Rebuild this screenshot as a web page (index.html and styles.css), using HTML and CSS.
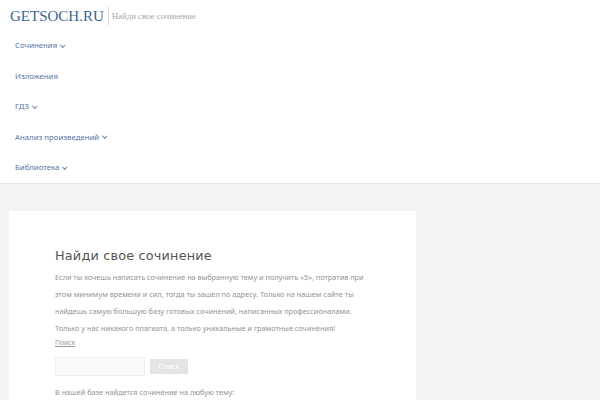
FILE: index.html
```html
<!DOCTYPE html>
<html lang="ru">
<head>
<meta charset="utf-8">
<link rel="stylesheet" href="styles.css">
</head>
<body>
<header class="site-header">
  <div class="branding">
    <a class="logo" href="#">GETSOCH.RU</a>
    <span class="tagline">Найди свое сочинение</span>
  </div>
  <nav class="menu">
    <a class="menu-item" href="#">Сочинения <span class="caret"></span></a>
    <a class="menu-item" href="#">Изложения</a>
    <a class="menu-item" href="#">ГДЗ <span class="caret"></span></a>
    <a class="menu-item" href="#">Анализ произведений <span class="caret"></span></a>
    <a class="menu-item" href="#">Библиотека <span class="caret"></span></a>
  </nav>
</header>
<main class="content">
  <article class="card">
    <h1 class="title">Найди свое сочинение</h1>
    <p class="intro">Если ты хочешь написать сочинение на выбранную тему и получить «5», потратив при этом минимум времени и сил, тогда ты зашел по адресу. Только на нашем сайте ты найдешь самую большую базу готовых сочинений, написанных профессионалами. Только у нас никакого плагиата, а только уникальные и грамотные сочинения!</p>
    <a class="search-label" href="#">Поиск</a>
    <form class="search">
      <input class="search-input" type="text">
      <button class="search-btn" type="button">Поиск</button>
    </form>
    <p class="note">В нашей базе найдется сочинение на любую тему:</p>
  </article>
</main>
</body>
</html>
```
FILE: styles.css
```css
html, body {
  margin: 0;
  padding: 0;
  background: #f4f4f4;
  font-family: "DejaVu Sans", sans-serif;
  overflow: hidden;
  height: 400px;
}
.site-header {
  background: #fff;
  height: 183px;
  border-bottom: 1px solid #e8e8e8;
}
.branding {
  display: flex;
  align-items: center;
  padding: 6px 0 0 10px;
  height: 20px;
}
.logo {
  font-family: "Liberation Serif", serif;
  font-size: 15px;
  color: #3a6690;
  text-decoration: none;
  line-height: 18px;
  padding-right: 4px;
  border-right: 1px solid #d8d8d8;
}
.tagline {
  font-family: "Liberation Serif", serif;
  font-size: 8.8px;
  color: #a8a8a8;
  padding-left: 3px;
  line-height: 12px;
}
.menu {
  display: flex;
  flex-direction: column;
  padding: 13px 0 0 15px;
}
.menu-item {
  font-family: "Noto Sans", sans-serif;
  font-size: 7.8px;
  color: #5a74a8;
  text-decoration: none;
  height: 30.6px;
  line-height: 12px;
  display: flex;
  align-items: flex-start;
  gap: 4px;
}
.caret {
  display: inline-block;
  width: 2.5px;
  height: 2.5px;
  border-right: 1px solid #6a82b0;
  border-bottom: 1px solid #6a82b0;
  transform: rotate(45deg);
  margin-top: 3.5px;
}
.content {
  padding: 27px 0 0 9px;
}
.card {
  background: #fff;
  width: 407px;
  box-sizing: border-box;
  padding: 36px 46px 0 46px;
  height: 200px;
}
.title {
  margin: 0;
  font-family: "DejaVu Sans", sans-serif;
  font-weight: normal;
  font-size: 12.8px;
  color: #555;
  letter-spacing: 0.2px;
  line-height: 18px;
}
.intro {
  margin: 4px 0 0 0;
  font-family: "Noto Sans", sans-serif;
  font-size: 7.3px;
  line-height: 17px;
  color: #939393;
  width: 318px;
}
.search-label {
  display: block;
  margin-top: 0;
  font-family: "Noto Sans", sans-serif;
  font-size: 6.8px;
  color: #999;
  text-decoration: underline;
  line-height: 12px;
}
.search {
  display: flex;
  align-items: center;
  gap: 5px;
  margin-top: 8px;
}
.search-input {
  width: 90px;
  height: 19px;
  box-sizing: border-box;
  border: 1px solid #f0f0f0;
  background: #fafafa;
  margin: 0;
}
.search-btn {
  width: 38px;
  height: 15px;
  border: none;
  background: #e4e4e4;
  color: #fff;
  font-family: "Noto Sans", sans-serif;
  font-size: 7px;
  padding: 0;
  margin: 0;
}
.note {
  margin: 10px 0 0 0;
  font-family: "Noto Sans", sans-serif;
  font-size: 7.3px;
  color: #939393;
  line-height: 12px;
}
```
